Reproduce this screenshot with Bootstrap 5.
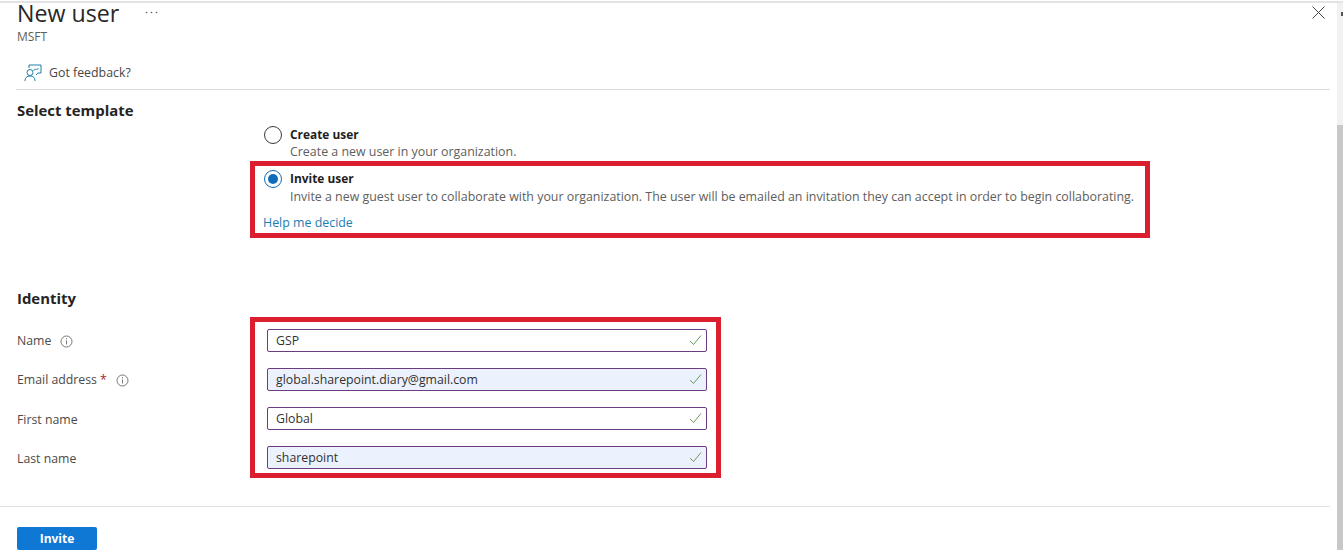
<!doctype html>
<html lang="en">
<head>
<meta charset="utf-8">
<title>New user</title>
<link href="https://cdn.jsdelivr.net/npm/bootstrap@5.3.0/dist/css/bootstrap.min.css" rel="stylesheet">
<style>
html,body{height:550px;overflow:hidden;background:#fff}
body{font-family:"Open Sans","Noto Sans",sans-serif;font-size:12.3px;color:#323130}
.shell{height:550px;border-top:2px solid #e3e3e3;margin-top:1px}
.pane{flex:1 1 auto;min-width:0;height:547px;overflow:hidden}
.scroll-track{width:6px;flex:none;background:#f1f1f1;display:flex;flex-direction:column}
.scroll-track i{display:block;height:122px;flex:none;overflow:hidden}
.scroll-track i::after{content:"";display:block;width:2px;height:4px;margin:9px 0 0 4px;background:#555}
.scroll-track b{display:block;flex:1;background:#c8c8c8}
.head-area{height:87px;margin:0 7px 0 16px;border-bottom:1px solid #d9d9d9;position:relative}
.title-line{height:21px;line-height:21px;font-size:23.2px;color:#292827;padding-left:1px;gap:26px}
.title-dots{display:block;margin-top:-3px}
.org{font-size:12px;color:#605e5c;line-height:16px;margin-top:5px;padding-left:1px}
.fb{margin:20px 0 0 8px;height:16px;gap:7px;color:#484644;font-size:12.35px;line-height:16px}
.close-x{position:absolute;right:5px;top:3px}
.sec-title{font-size:14.9px;font-weight:700;color:#252423;line-height:20px;padding-left:1px}
.sec-a{margin:10px 0 0 16px}
.opts{margin:5px 0 0 260px}
.opt{gap:8px;padding-left:0}
.radio-dot{width:18px;height:18px;border-radius:50%;border:1.5px solid #3b3a39;flex:none;margin-top:1px;display:flex;align-items:center;justify-content:center}
.radio-dot.on{border-color:#0f6cbd}
.radio-dot.on::after{content:"";width:10px;height:10px;border-radius:50%;background:#0f6cbd}
.opt-name{font-weight:700;font-size:11.9px;color:#1f1e1d;line-height:18px}
.opt-desc{font-size:12.4px;color:#605e5c;line-height:18px;white-space:nowrap}
.red-a .opt-desc{margin-top:1px}
.red-a{border:5px solid #dc1f2e;width:900px;height:77px;margin:0 0 0 -10px;padding:3px 0 0 9px}
.help{display:block;color:#1a7db5;font-size:12.4px;line-height:16px;text-decoration:none;margin:9px 0 0 -1px}
.sec-b{margin:50px 0 0 16px}
.id-row{display:flex;margin-top:9px}
.lbls{width:234px;flex:none;padding-top:13px}
.lbl{height:39.33px;line-height:22px;color:#4c4a48;padding-left:1px;display:flex;gap:9px}
.lbl em{color:#a4262c;font-style:normal;margin:0 0 0 -6px}
.info{width:13px;height:13px;margin-top:5px}
.red-b{border:5px solid #dc1f2e;width:471px;height:161px;padding:7px 9px 0 12px;display:flex;flex-direction:column;gap:16px}
.fld{position:relative;height:23px}
.fld .form-control{height:23px;min-height:0;border:1px solid #6b3d80;border-radius:2px;padding:0 24px 0 8px;font:inherit;color:#323130;box-shadow:none}
.fld .form-control.auto{background:#ebf2fe}
.tick{position:absolute;right:5px;top:5px;width:13px;height:12px}
.foot{margin:19px 7px 0 0;border-top:1px solid #e1e1e1;padding:20px 0 0 17px}
.foot .btn{width:80px;height:23px;padding:0;border-radius:2px;background:#0f78d4;border:0;font-size:12px;font-weight:700;color:#fff;line-height:23px}
</style>
</head>
<body>
<div class="shell d-flex">
  <div class="pane">
    <div class="head-area">
      <div class="title-line d-flex align-items-center"><span>New user</span>
        <svg class="title-dots" width="13" height="3" viewBox="0 0 13 3" fill="#5c5c5c"><circle cx="1.500" cy="1.500" r=".8"/><circle cx="6.500" cy="1.500" r=".8"/><circle cx="11.500" cy="1.500" r=".8"/></svg></div>
      <div class="org">MSFT</div>
      <div class="fb d-flex align-items-center">
        <svg width="18" height="18" viewBox="0 0 18 18" fill="none" stroke="#1f7fa8" stroke-width="1"><circle cx="6" cy="8.500" r="3"/><path d="M1 17c0-3.500 2-5 5-5s5 1.500 5 5"/><path d="M5 4V1h12v8h-3l-2 2"/><path d="M9.500 6.500l2-1.500 1 1 2-2"/></svg>
        <span>Got feedback?</span>
      </div>
      <svg class="close-x" width="13" height="13" viewBox="0 0 13 13" stroke="#444" stroke-width="1"><path d="M.5.500l12 12M12.500.500l-12 12"/></svg>
    </div>
    <div class="sec-title sec-a">Select template</div>
    <div class="opts">
      <div class="d-flex opt ms-1 ps-0">
        <span class="radio-dot"></span>
        <div><div class="opt-name">Create user</div><div class="opt-desc">Create a new user in your organization.</div></div>
      </div>
      <div class="red-a">
        <div class="d-flex opt">
          <span class="radio-dot on"></span>
          <div><div class="opt-name">Invite user</div><div class="opt-desc">Invite a new guest user to collaborate with your organization. The user will be emailed an invitation they can accept in order to begin collaborating.</div></div>
        </div>
        <a class="help" href="#">Help me decide</a>
      </div>
    </div>
    <div class="sec-title sec-b">Identity</div>
    <div class="id-row ms-3">
      <div class="lbls">
        <div class="lbl">Name <svg class="info" viewBox="0 0 13 13" fill="none" stroke="#777"><circle cx="6.500" cy="6.500" r="5.500"/><path d="M6.500 5.500v4M6.500 3.200v1.200"/></svg></div>
        <div class="lbl">Email address <em>*</em> <svg class="info" viewBox="0 0 13 13" fill="none" stroke="#777"><circle cx="6.500" cy="6.500" r="5.500"/><path d="M6.500 5.500v4M6.500 3.200v1.200"/></svg></div>
        <div class="lbl">First name</div>
        <div class="lbl">Last name</div>
      </div>
      <div class="red-b">
        <div class="fld"><input class="form-control" value="GSP" aria-label="Name"><svg class="tick" viewBox="0 0 13 12" fill="none" stroke="#6c9a5b"><path d="M1 7l3.500 3.500L12 1.500"/></svg></div>
        <div class="fld"><input class="form-control auto" value="global.sharepoint.diary@gmail.com" aria-label="Email address"><svg class="tick" viewBox="0 0 13 12" fill="none" stroke="#6c9a5b"><path d="M1 7l3.500 3.500L12 1.500"/></svg></div>
        <div class="fld"><input class="form-control" value="Global" aria-label="First name"><svg class="tick" viewBox="0 0 13 12" fill="none" stroke="#6c9a5b"><path d="M1 7l3.500 3.500L12 1.500"/></svg></div>
        <div class="fld"><input class="form-control auto" value="sharepoint" aria-label="Last name"><svg class="tick" viewBox="0 0 13 12" fill="none" stroke="#6c9a5b"><path d="M1 7l3.500 3.500L12 1.500"/></svg></div>
      </div>
    </div>
    <div class="foot"><button type="button" class="btn btn-primary">Invite</button></div>
  </div>
  <div class="scroll-track"><i></i><b></b></div>
</div>
<script src="https://cdn.jsdelivr.net/npm/bootstrap@5.3.0/dist/js/bootstrap.bundle.min.js"></script>
</body>
</html>
